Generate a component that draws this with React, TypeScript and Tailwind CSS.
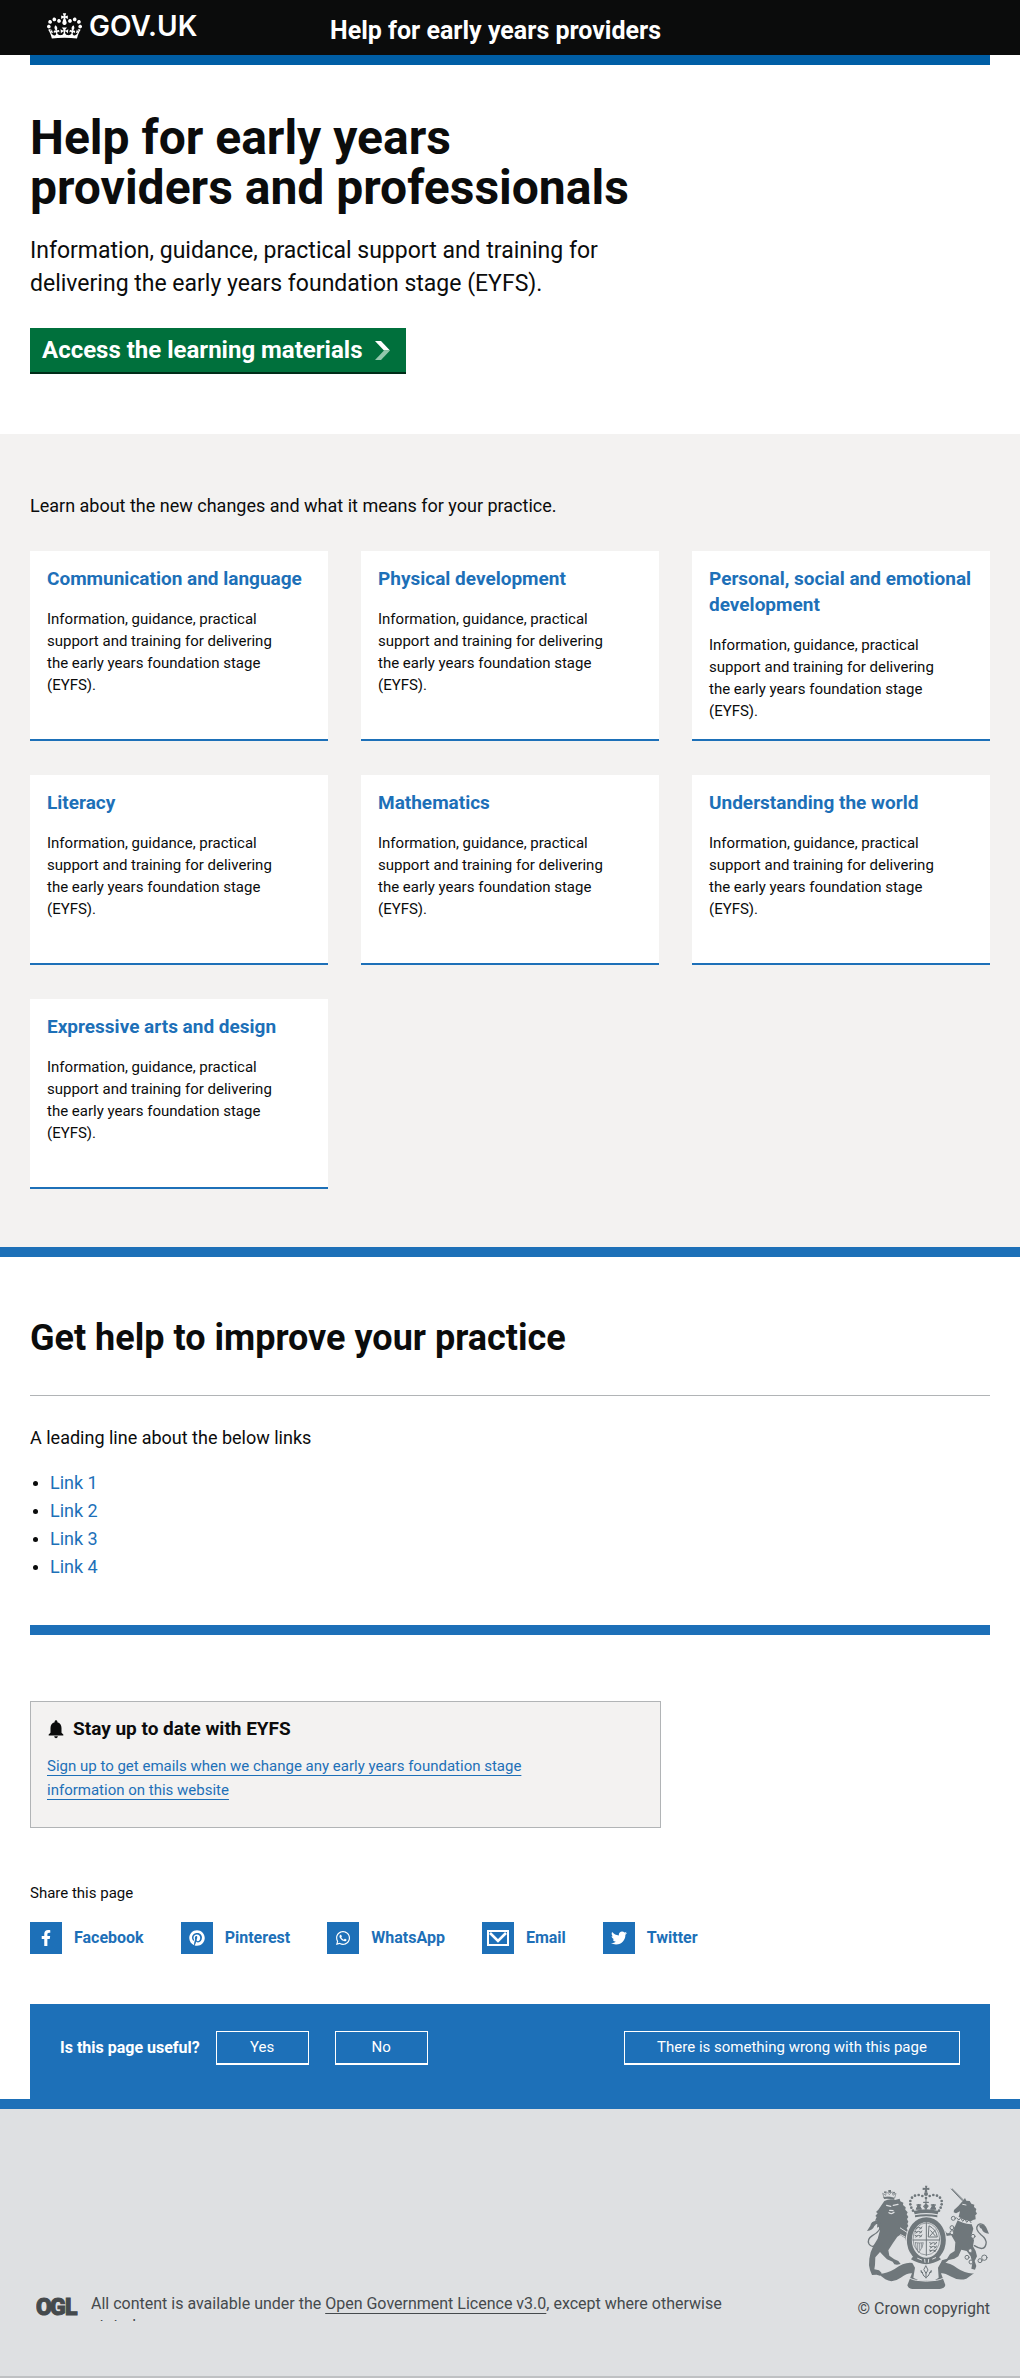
import type { ReactNode } from "react";
import { FaFacebookF, FaPinterest, FaTwitter, FaWhatsapp } from "react-icons/fa";
import { MdNotifications } from "react-icons/md";

const summary =
  "Information, guidance, practical support and training for delivering the early years foundation stage (EYFS).";

const areas = [
  "Communication and language",
  "Physical development",
  "Personal, social and emotional development",
  "Literacy",
  "Mathematics",
  "Understanding the world",
  "Expressive arts and design",
];

const links = ["Link 1", "Link 2", "Link 3", "Link 4"];

function Crown() {
  return (
    <svg viewBox="0 0 132 97" className="h-[26px] w-[35px] shrink-0" fill="currentColor" aria-hidden="true">
      <path d="M25 30.2c3.5 1.5 7.7-.2 9.1-3.7 1.5-3.6-.2-7.8-3.9-9.2-3.6-1.4-7.6.3-9.1 3.9-1.4 3.5.3 7.5 3.9 9zM9 39.5c3.6 1.5 7.8-.2 9.2-3.7 1.5-3.6-.2-7.8-3.9-9.1-3.6-1.5-7.6.2-9.1 3.8-1.4 3.5.3 7.5 3.8 9zM4.4 57.2c3.5 1.5 7.7-.2 9.1-3.8 1.5-3.6-.2-7.7-3.9-9.1-3.5-1.5-7.6.3-9.1 3.8-1.4 3.5.3 7.6 3.9 9.1zm38.3-21.4c3.5 1.5 7.7-.2 9.1-3.8 1.5-3.6-.2-7.7-3.9-9.1-3.6-1.5-7.6.3-9.1 3.8-1.3 3.6.4 7.7 3.9 9.1zm64.4-5.6c-3.6 1.5-7.8-.2-9.1-3.7-1.5-3.6.2-7.8 3.8-9.2 3.6-1.4 7.7.3 9.2 3.9 1.3 3.5-.4 7.5-3.9 9zm15.9 9.3c-3.6 1.5-7.7-.2-9.1-3.7-1.5-3.6.2-7.8 3.7-9.1 3.6-1.5 7.7.2 9.2 3.8 1.5 3.5-.3 7.5-3.8 9zm4.7 17.7c-3.6 1.5-7.8-.2-9.2-3.8-1.5-3.6.2-7.7 3.9-9.1 3.6-1.5 7.7.3 9.2 3.8 1.3 3.5-.4 7.6-3.9 9.1zM89.3 35.8c-3.6 1.5-7.8-.2-9.2-3.8-1.4-3.6.2-7.7 3.9-9.1 3.6-1.5 7.7.3 9.2 3.8 1.4 3.6-.3 7.7-3.9 9.1zM69.7 17.7l8.9 4.7V9.3l-8.9 2.8c-.2-.3-.5-.6-.9-.9L72.4 0H59.6l3.5 11.2c-.3.3-.6.5-.9.9l-8.8-2.8v13.1l8.8-4.7c.3.3.6.7.9.9l-5 15.4v.1c-.2.8-.4 1.6-.4 2.4 0 4.1 3.1 7.5 7 8.1h.2c.3 0 .7.1 1 .1.4 0 .7 0 1-.1h.2c4-.6 7.1-4.1 7.1-8.1 0-.8-.1-1.7-.4-2.4V34l-5.1-15.4c.4-.2.7-.6 1-.9zM66 92.8c16.9 0 32.8 1.1 47.1 3.2 4-16.9 8.9-26.7 14-33.5l-9.6-3.4c1 4.9 1.1 7.2 0 10.2-1.5-1.4-3-4.3-4.2-8.7L108.6 76c2.8-2 5-3.2 7.5-3.3-4.4 9.4-10 11.9-13.6 11.2-4.3-.8-6.3-4.6-5.6-7.9 1-4.7 5.7-5.9 8-.5 4.3-8.7-3-11.4-7.6-8.8 7.1-7.2 7.9-13.5 2.1-21.1-8 6.1-8.1 12.3-4.5 20.8-4.7-5.4-12.1-2.5-9.5 6.2 3.4-5.2 7.9-2 7.2 3.1-.6 4.3-6.4 7.8-13.5 7.2-10.3-.9-10.9-8-11.2-13.8 2.5-.5 7.1 1.8 11 7.3L80.2 60c-4.1 4.4-8 5.3-12.3 5.4 1.4-4.4 8-11.6 8-11.6H55.5s6.4 7.2 7.9 11.6c-4.2-.1-8-1-12.3-5.4l1.4 16.4c3.9-5.5 8.5-7.7 10.9-7.3-.3 5.8-.9 12.8-11.1 13.8-7.2.6-12.9-2.9-13.5-7.2-.7-5 3.8-8.3 7.1-3.1 2.7-8.7-4.6-11.6-9.4-6.2 3.7-8.5 3.6-14.7-4.6-20.8-5.8 7.6-5 13.9 2.2 21.1-4.7-2.6-11.9.1-7.7 8.8 2.3-5.5 7.1-4.2 8.1.5.7 3.3-1.3 7.1-5.7 7.9-3.5.7-9-1.8-13.5-11.2 2.5.1 4.7 1.3 7.5 3.3l-4.7-15.4c-1.2 4.4-2.7 7.2-4.3 8.7-1.1-3-.9-5.3 0-10.2l-9.5 3.4c5 6.9 9.9 16.7 14 33.5 14.8-2.1 30.8-3.2 47.7-3.2z" />
    </svg>
  );
}

function Chevron() {
  return (
    <svg viewBox="0 0 16 19" className="h-[19px] w-4 shrink-0" aria-hidden="true">
      <path d="M1 0h6l9 9.500h-6z" fill="#fff" />
      <path d="M10 9.500h6L7 19H1z" fill="#93c7ac" />
    </svg>
  );
}

function Envelope() {
  return (
    <svg viewBox="0 0 22 16" className="h-4 w-[22px]" fill="none" stroke="currentColor" aria-hidden="true">
      <rect x="1" y="1" width="20" height="14" strokeWidth="2" />
      <path d="M3 3l8 8 8-8" strokeWidth="2.600" />
    </svg>
  );
}

const crownBeads = [
  [228, 82], [217, 76], [206, 73], [195, 75], [186, 81], [181, 91], [181, 101], [184, 111], [189, 120],
  [239, 76], [250, 73], [261, 75], [270, 81], [275, 91], [275, 101], [272, 111], [267, 120],
];

const charges = [
  [206, 172], [206, 184], [206, 196], [250, 218], [250, 229], [249, 240],
];

function RoyalArms() {
  return (
    <svg viewBox="45 40 375 315" className="h-[105px] w-[125px]" fill="#6f777b" stroke="#6f777b" strokeLinecap="round" strokeLinejoin="round" aria-label="Royal coat of arms" role="img">
      {/* crown */}
      <path d="M225 45h7l-1 7 7-1v7l-7-1 1 8h-8l1-8-7 1v-7l8 1z" stroke="none" />
      <circle cx="228" cy="70" r="6" stroke="none" />
      {crownBeads.map(([x, y]) => (
        <circle key={`${x}-${y}`} cx={x} cy={y} r="4" stroke="none" />
      ))}
      <path d="M191 121q37-11 75 0l-3 10q-35-8-69 0z" stroke="none" />
      <path d="M195 134q33-7 67 0v6q-33-6-67 0z" stroke="none" />
      <path d="M228 86v30M221 106l7-7 7 7-7 9zM199 115l7-15 8 15zM242 115l8-15 7 15z" strokeWidth="3" />
      <path d="M201 103h11M244 103h12M221 95h14" strokeWidth="4" fill="none" />

      {/* lion's crown */}
      <path d="M102 80l-4-12 9 6 2-11 9 9 8-9 3 11 9-6-4 14q-15-5-32-2z" strokeWidth="2" fill="none" />
      <path d="M101 80q16-4 32 3v5q-15-5-31-3zM115 58h8v8h-8z" stroke="none" />
      <circle cx="105" cy="65" r="3" stroke="none" />
      <circle cx="132" cy="66" r="3" stroke="none" />

      {/* lion */}
      <path d="M103 91q16-8 32-3l14-4 2 8 9 4-1 7 8 7-1 7 7 8-3 6 5 8-4 6 4 8-3 6 3 7-5 7 8 17 9 11 2 17-8-2-5 8-6-5-4-16-16-10-8 5-13 19-14 22 3 16 15 11 12 5 7 9-11 2-8-1-5-8-17-7-12-12-9-10-14 16-1 23-2 13 14 3 8 8-5 8-10-3-14 1-6-15-3-14 1-20 4-19 9-21 12-20 7-25-4-11-5 3 1-10-5-1 3-10-5 0 5-11-4-3 7-8-5-4 7-7z" stroke="none" />
      <path d="M84 216q-17 20-27 4-7-14 10-25 29-16 24-35-4-12-22-4" fill="none" strokeWidth="4" />
      <path d="M79 151q-16 1-18 14l-10 16q17-1 22-15 8-6 6-15z" stroke="none" />
      <path d="M110 104l12 3M130 104l14-3M119 119l10 1M117 126q8 6 15-1" stroke="#dee0e2" strokeWidth="4" fill="none" />
      <path d="M151 172l23 15M152 192l13 7" stroke="#dee0e2" strokeWidth="3" fill="none" />

      {/* unicorn */}
      <path d="M304 55l33 35M307 55l33 33" strokeWidth="3" fill="none" />
      <path d="M338 91l7-9 4 8 10 1 5 8 9 3-1 7 7 6-2 7 4 7-5 5 1 12-8 2-6 4-22-5-15-9 4-16-12 6-7-3 1-7 13-12z" stroke="none" />
      <path d="M325 144q17 12 39 14l6 16-5 18 7 17-3 18 8 14 4 16-7 14 5 15-4 11-11-3 3-17-5-20-12-16-16-4-9 20-12 7-17 4-14 13-10-3 4-9 15-5 9-14 14-9 2-26-12-21-15 2-9 10 8 10-4 6-12-8 4-15 12-10-15-10-9 5-9-11 7-6 16 5 13 16 15-1z" stroke="none" />
      <path d="M320 143q19 12 43 14" strokeWidth="8" stroke="#dee0e2" fill="none" />
      <path d="M320 142l7 6 5-7 6 11 7-7 5 10 7-7 6 8" strokeWidth="3" fill="none" />
      <path d="M373 225q30 19 35-5 3-15-15-28-20-17-9-29 8-7 18 1" fill="none" strokeWidth="4" />
      <path d="M388 162q17-2 22 11l7 16q-18-1-22-15-8-3-7-12z" stroke="none" />
      <path d="M338 101l10 2" stroke="#dee0e2" strokeWidth="3" />
      <g fill="#dee0e2" strokeWidth="3">
        <circle cx="310" cy="143" r="6" />
        <circle cx="306" cy="171" r="6" />
        <circle cx="306" cy="186" r="6" />
        <circle cx="369" cy="197" r="6" />
        <circle cx="361" cy="240" r="6" />
        <circle cx="351" cy="260" r="6" />
        <circle cx="363" cy="274" r="6" />
        <circle cx="390" cy="270" r="6" />
        <circle cx="403" cy="261" r="8" />
      </g>

      {/* ribbon */}
      <path d="M84 309q25 1 50-14 30-22 53-18l8 14-5 30 12 6q28 7 55 0l9-6-2-30 8-14q25-3 50 16 25 17 50 15l-23 16q-23 8-48-7-18-11-28-9l13 35q-1 9-13 11-45 6-90 0-9-2-11-10l14-36q-14-1-34 13-25 18-46 5z" stroke="none" />
      <path d="M171 315q5 10 28 14 30 5 60 0 24-4 29-14" stroke="#dee0e2" strokeWidth="3" fill="none" />

      {/* garter and shield */}
      <ellipse cx="229" cy="209" rx="62" ry="71" fill="#dee0e2" stroke="none" />
      <ellipse cx="229" cy="208" rx="51" ry="61" fill="#dee0e2" strokeWidth="15" />
      <ellipse cx="229" cy="205" rx="40" ry="48" fill="none" strokeWidth="2" />
      <path d="M229 156v98M189 208h80" strokeWidth="3" />
      {charges.map(([x, y]) => (
        <path key={`${x}-${y}`} d={`M${x - 11} ${y - 2}l5 2 6-2 6 2 4-3M${x - 9} ${y + 3}l4-2M${x + 3} ${y + 3}l5-2`} strokeWidth="3" fill="none" />
      ))}
      <path d="M238 166q20 9 24 33h-26zM242 180l14 16M256 178l-16 18" fill="none" strokeWidth="3" />
      <path d="M196 216q15 2 24 0-1 14-14 30-10-14-10-30M203 218v20M209 218v20M215 218v12" strokeWidth="2" fill="none" />
      <path d="M190 257q38 28 75 0l8 9q-44 29-90 0z" stroke="none" />
      <path d="M203 263l12 5M224 266l1 9M236 266l-1 9M248 265l9-4" stroke="#dee0e2" strokeWidth="3" />

      {/* fleuron */}
      <path d="M228 286l6 12-6 10-6-10zM228 308v14M221 315l-7-14M235 315l8-14M218 306q-7 2-5-6M239 306q7 2 5-6M221 315l7 6 7-6" fill="none" strokeWidth="3" />
    </svg>
  );
}

function OglLogo() {
  return (
    <svg viewBox="0 0 42 20" className="mt-1 h-5 w-[42px] shrink-0" fill="#454a4d" aria-label="OGL" role="img">
      <g fontFamily="Roboto" fontWeight="900" fontSize="23" stroke="#454a4d" strokeWidth="1">
        <text x="0" y="18">O</text>
        <text x="14" y="18">G</text>
        <text x="29" y="18">L</text>
      </g>
    </svg>
  );
}

function Container({ children, className = "" }: { children?: ReactNode; className?: string }) {
  return <div className={`mx-[30px] ${className}`}>{children}</div>;
}

function AreaCard({ title }: { title: string }) {
  return (
    <article className="min-h-[190px] border-b-2 border-[#1d70b8] bg-white px-[17px] pt-[15px]">
      <h2 className="-mr-3 text-[19px] font-bold leading-[26px] text-[#1d70b8]">
        <a href="#">{title}</a>
      </h2>
      <p className="mt-4 max-w-[240px] text-[15px] leading-[22px]">{summary}</p>
    </article>
  );
}

function ShareLink({ label, children }: { label: string; children: ReactNode }) {
  return (
    <a href="#" className="flex items-center gap-3 font-bold text-[#1d70b8]">
      <span className="flex h-8 w-8 items-center justify-center bg-[#1d70b8] text-base text-white">{children}</span>
      {label}
    </a>
  );
}

const outlineButton = "h-[34px] border border-b-2 border-white text-[15px]";

export default function App() {
  return (
    <div className="bg-white font-['Roboto',sans-serif] text-base text-[#0b0c0c]">
      <header>
        <div className="flex h-[55px] items-start bg-[#0b0c0c] pl-[47px] text-white">
          <a href="#" className="flex w-[283px] items-center gap-[7px] pt-2.5 font-['Inter',sans-serif] text-[28px] font-semibold leading-8">
            <Crown />
            GOV.UK
          </a>
          <a href="#" className="pt-4 text-[25px] font-bold leading-[30px]">Help for early years providers</a>
        </div>
        <Container className="h-2.5 bg-[#005ea5]" />
      </header>

      <main>
        <Container className="pt-12 pb-[60px]">
          <h1 className="max-w-[620px] text-[48px] font-bold leading-[50px]">
            Help for early years
            <br />
            providers and professionals
          </h1>
          <p className="mt-[21px] max-w-[600px] text-[23px] leading-[33px]">{summary}</p>
          <a href="#" className="mt-7 inline-flex h-[46px] items-center gap-3 border-b-2 border-[#002d18] bg-[#00703c] pr-4 pl-3 align-top text-2xl font-bold text-white">
            Access the learning materials
            <Chevron />
          </a>
        </Container>

        <section className="border-b-[10px] border-[#1d70b8] bg-[#f3f2f1] pt-[58px] pb-[58px]">
          <Container>
            <p className="text-lg leading-7">Learn about the new changes and what it means for your practice.</p>
            <div className="mt-[31px] grid grid-cols-3 gap-x-[33px] gap-y-[34px]">
              {areas.map((title) => (
                <AreaCard key={title} title={title} />
              ))}
            </div>
          </Container>
        </section>

        <Container>
          <section className="border-b-[10px] border-[#1d70b8] pt-[61px] pb-11">
            <h2 className="text-4xl font-bold leading-10">Get help to improve your practice</h2>
            <hr className="mt-[37px] border-[#b1b4b6]" />
            <p className="mt-7 text-lg leading-7">A leading line about the below links</p>
            <ul className="mt-[17px] list-disc pl-5 text-lg leading-7 marker:text-base">
              {links.map((link) => (
                <li key={link}>
                  <a href="#" className="text-[#1d70b8]">{link}</a>
                </li>
              ))}
            </ul>
          </section>

          <section className="mt-[66px] max-w-[631px] border border-[#b1b4b6] bg-[#f3f2f1] px-4 pt-3.5 pb-[25px]">
            <h2 className="-ml-0.5 flex items-center gap-1.5 text-[19px] font-bold leading-[26px]">
              <MdNotifications className="size-[22px]" />
              Stay up to date with EYFS
            </h2>
            <p className="mt-3 max-w-[500px] text-[15px] leading-6">
              <a href="#" className="text-[#1d70b8] underline underline-offset-4">
                Sign up to get emails when we change any early years foundation stage information on this website
              </a>
            </p>
          </section>

          <section className="mt-[53px]">
            <h2 className="text-[15px] leading-6">Share this page</h2>
            <div className="mt-[17px] flex flex-wrap gap-[37px]">
              <ShareLink label="Facebook"><FaFacebookF /></ShareLink>
              <ShareLink label="Pinterest"><FaPinterest /></ShareLink>
              <ShareLink label="WhatsApp"><FaWhatsapp /></ShareLink>
              <ShareLink label="Email"><Envelope /></ShareLink>
              <ShareLink label="Twitter"><FaTwitter /></ShareLink>
            </div>
          </section>

          <section className="mt-[50px] flex items-start bg-[#1d70b8] px-[30px] pt-[27px] pb-[34px] text-white">
            <h2 className="font-bold leading-[34px]">Is this page useful?</h2>
            <button type="button" className={`ml-4 w-[93px] ${outlineButton}`}>Yes</button>
            <button type="button" className={`ml-[26px] w-[93px] ${outlineButton}`}>No</button>
            <button type="button" className={`ml-auto w-[336px] ${outlineButton}`}>There is something wrong with this page</button>
          </section>
        </Container>
      </main>

      <footer className="border-t-[10px] border-b-2 border-t-[#1d70b8] border-b-[#bfc1c3] bg-[#dee0e2] text-[#454a4d]">
        <div className="flex items-end justify-between pt-[75px] pr-[30px] pb-[55px] pl-9">
          <div className="flex h-7 gap-[13px] overflow-hidden">
            <OglLogo />
            <p className="max-w-[645px] leading-[22px]">
              All content is available under the{" "}
              <a href="#" className="underline underline-offset-4">Open Government Licence v3.0</a>, except where otherwise stated
            </p>
          </div>
          <div className="flex flex-col items-end">
            <RoyalArms />
            <a href="#" className="mt-2 leading-6">© Crown copyright</a>
          </div>
        </div>
      </footer>
    </div>
  );
}
